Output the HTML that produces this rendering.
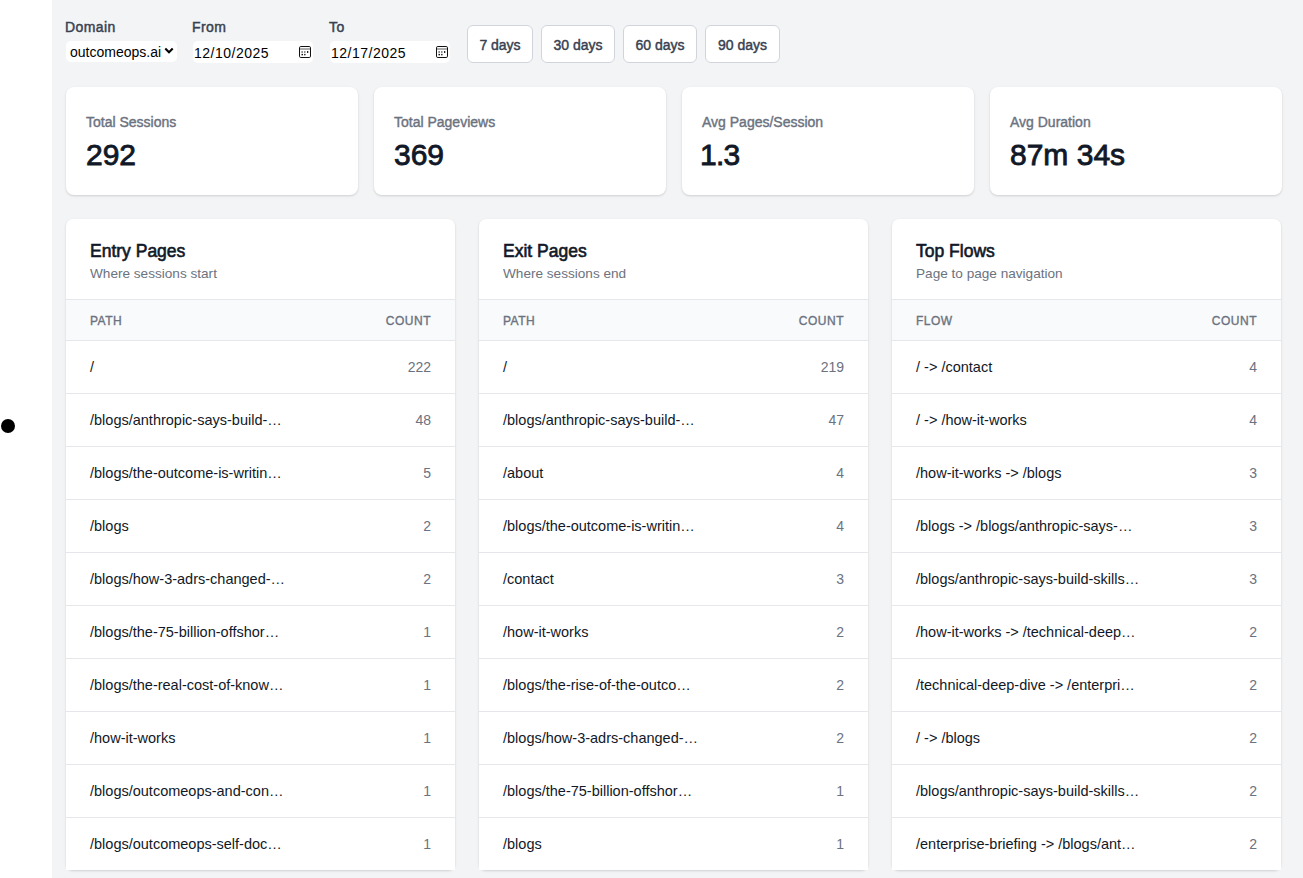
<!DOCTYPE html>
<html><head><meta charset="utf-8">
<style>
*{box-sizing:border-box;margin:0;padding:0}
html,body{width:1303px;height:878px;overflow:hidden;background:#fff;font-family:"Liberation Sans",sans-serif;color:#111827}
.dot{position:absolute;left:1px;top:419px;width:14px;height:14px;border-radius:50%;background:#000}
.main{position:absolute;left:52px;top:0;width:1251px;height:878px;background:#f3f4f6}
.lbl{position:absolute;top:19px;letter-spacing:.4px;font-size:14px;color:#374151;-webkit-text-stroke:.45px #374151;line-height:16px;white-space:nowrap}
.sel{position:absolute;top:41px;height:21px;background:#fff;border-radius:5px;font-size:14px;color:#000;line-height:21px;white-space:nowrap}
.inp{position:absolute;top:41px;height:22px;background:#fff;border-radius:5px;font-size:14px;color:#000;line-height:21px;white-space:nowrap}
.st{position:absolute;left:4px;top:1px}
.it{position:absolute;left:1px;top:2px;letter-spacing:.5px}
.chev{position:absolute;right:3px;top:6px}
.cal{position:absolute;left:106px;top:5px}
.btn{position:absolute;top:25px;height:38px;background:#fff;border:1px solid #d1d5db;border-radius:6px;font-size:14px;-webkit-text-stroke:.45px #374151;color:#374151;text-align:center;line-height:38px;white-space:nowrap}
.stat{position:absolute;top:87px;width:292px;height:108px;background:#fff;border-radius:8px;box-shadow:0 1px 3px rgba(0,0,0,.1),0 1px 2px rgba(0,0,0,.06)}
.stat .t{position:absolute;left:20px;top:27px;font-size:14px;color:#6b7280;-webkit-text-stroke:.4px #6b7280;line-height:16px;white-space:nowrap}
.stat .v{position:absolute;left:20px;top:51px;font-size:30px;color:#111827;-webkit-text-stroke:.85px #111827;line-height:34px;white-space:nowrap}
.card{position:absolute;top:219px;width:389px;height:651px;background:#fff;border-radius:7px;box-shadow:0 1px 3px rgba(0,0,0,.1),0 1px 2px rgba(0,0,0,.06)}
.card .h3{position:absolute;left:24px;top:22px;font-size:17.5px;color:#111827;-webkit-text-stroke:.6px #111827;line-height:20px;white-space:nowrap}
.card .sub{position:absolute;left:24px;top:47px;font-size:13.6px;color:#6b7280;line-height:16px;white-space:nowrap}
.thead{position:absolute;left:0;top:80px;width:389px;height:42px;background:#f9fafb;border-top:1px solid #e5e7eb;border-bottom:1px solid #e5e7eb}
.thead span{position:absolute;top:14px;-webkit-text-stroke:.35px #6b7280;font-size:12px;color:#6b7280;letter-spacing:.5px;line-height:14px}
.thead .hl{left:24px}.thead .hr{right:24px}
.row{position:absolute;left:0;width:389px;height:53px;background:#fff;border-bottom:1px solid #e5e7eb;font-size:14.5px;line-height:16px;white-space:nowrap}
.row .p{position:absolute;left:24px;top:18px;color:#111827}
.row .c{position:absolute;right:24px;top:18px;color:#6b7280;font-size:14px}

.row.last{border-bottom:0;height:52px}

</style></head><body>
<div class="dot"></div>
<div class="main"></div>
<div class="lbl" style="left:65px">Domain</div>
<div class="lbl" style="left:192px">From</div>
<div class="lbl" style="left:329px">To</div>
<div class="sel" style="left:66px;width:111px"><span class="st">outcomeops.ai</span><svg class="chev" width="10" height="8" viewBox="0 0 10 8"><path d="M1.3 1.6 L5 5.3 L8.7 1.6" fill="none" stroke="#000" stroke-width="2.1"/></svg></div>
<div class="inp" style="left:193px;width:120px"><span class="it">12/10/2025</span><svg class="cal" width="12" height="12" viewBox="0 0 12 12"><rect x="0.5" y="0.5" width="11" height="11" rx="1.3" fill="none" stroke="#111" stroke-width="1"/><rect x="1" y="2.2" width="10" height="1.6" fill="#999"/><rect x="2.5" y="5.1" width="1.2" height="1.8" fill="#555"/><rect x="5.1" y="5.1" width="1.4" height="1.8" fill="#777"/><rect x="8" y="5.1" width="1.3" height="1.8" fill="#111"/><rect x="2.5" y="7.9" width="1.5" height="1.4" fill="#111"/><rect x="5" y="7.9" width="1.6" height="1.4" fill="#333"/></svg></div>
<div class="inp" style="left:330px;width:120px"><span class="it">12/17/2025</span><svg class="cal" width="12" height="12" viewBox="0 0 12 12"><rect x="0.5" y="0.5" width="11" height="11" rx="1.3" fill="none" stroke="#111" stroke-width="1"/><rect x="1" y="2.2" width="10" height="1.6" fill="#999"/><rect x="2.5" y="5.1" width="1.2" height="1.8" fill="#555"/><rect x="5.1" y="5.1" width="1.4" height="1.8" fill="#777"/><rect x="8" y="5.1" width="1.3" height="1.8" fill="#111"/><rect x="2.5" y="7.9" width="1.5" height="1.4" fill="#111"/><rect x="5" y="7.9" width="1.6" height="1.4" fill="#333"/></svg></div>
<div class="btn" style="left:467px;width:66px">7 days</div>
<div class="btn" style="left:541px;width:74px">30 days</div>
<div class="btn" style="left:623px;width:74px">60 days</div>
<div class="btn" style="left:705px;width:75px">90 days</div>
<div class="stat" style="left:66px"><div class="t">Total Sessions</div><div class="v">292</div></div>
<div class="stat" style="left:374px"><div class="t">Total Pageviews</div><div class="v">369</div></div>
<div class="stat" style="left:682px"><div class="t">Avg Pages/Session</div><div class="v" style="letter-spacing:-.8px;left:18px">1.3</div></div>
<div class="stat" style="left:990px"><div class="t">Avg Duration</div><div class="v">87m 34s</div></div>
<div class="card" style="left:66px">
<div class="h3">Entry Pages</div><div class="sub">Where sessions start</div>
<div class="thead"><span class="hl">PATH</span><span class="hr">COUNT</span></div>
<div class="row" style="top:122px"><span class="p">/</span><span class="c">222</span></div>
<div class="row" style="top:175px"><span class="p">/blogs/anthropic-says-build-…</span><span class="c">48</span></div>
<div class="row" style="top:228px"><span class="p">/blogs/the-outcome-is-writin…</span><span class="c">5</span></div>
<div class="row" style="top:281px"><span class="p">/blogs</span><span class="c">2</span></div>
<div class="row" style="top:334px"><span class="p">/blogs/how-3-adrs-changed-…</span><span class="c">2</span></div>
<div class="row" style="top:387px"><span class="p">/blogs/the-75-billion-offshor…</span><span class="c">1</span></div>
<div class="row" style="top:440px"><span class="p">/blogs/the-real-cost-of-know…</span><span class="c">1</span></div>
<div class="row" style="top:493px"><span class="p">/how-it-works</span><span class="c">1</span></div>
<div class="row" style="top:546px"><span class="p">/blogs/outcomeops-and-con…</span><span class="c">1</span></div>
<div class="row last" style="top:599px"><span class="p">/blogs/outcomeops-self-doc…</span><span class="c">1</span></div>
</div>
<div class="card" style="left:479px">
<div class="h3">Exit Pages</div><div class="sub">Where sessions end</div>
<div class="thead"><span class="hl">PATH</span><span class="hr">COUNT</span></div>
<div class="row" style="top:122px"><span class="p">/</span><span class="c">219</span></div>
<div class="row" style="top:175px"><span class="p">/blogs/anthropic-says-build-…</span><span class="c">47</span></div>
<div class="row" style="top:228px"><span class="p">/about</span><span class="c">4</span></div>
<div class="row" style="top:281px"><span class="p">/blogs/the-outcome-is-writin…</span><span class="c">4</span></div>
<div class="row" style="top:334px"><span class="p">/contact</span><span class="c">3</span></div>
<div class="row" style="top:387px"><span class="p">/how-it-works</span><span class="c">2</span></div>
<div class="row" style="top:440px"><span class="p">/blogs/the-rise-of-the-outco…</span><span class="c">2</span></div>
<div class="row" style="top:493px"><span class="p">/blogs/how-3-adrs-changed-…</span><span class="c">2</span></div>
<div class="row" style="top:546px"><span class="p">/blogs/the-75-billion-offshor…</span><span class="c">1</span></div>
<div class="row last" style="top:599px"><span class="p">/blogs</span><span class="c">1</span></div>
</div>
<div class="card" style="left:892px">
<div class="h3">Top Flows</div><div class="sub">Page to page navigation</div>
<div class="thead"><span class="hl">FLOW</span><span class="hr">COUNT</span></div>
<div class="row" style="top:122px"><span class="p">/ -&gt; /contact</span><span class="c">4</span></div>
<div class="row" style="top:175px"><span class="p">/ -&gt; /how-it-works</span><span class="c">4</span></div>
<div class="row" style="top:228px"><span class="p">/how-it-works -&gt; /blogs</span><span class="c">3</span></div>
<div class="row" style="top:281px"><span class="p">/blogs -&gt; /blogs/anthropic-says-…</span><span class="c">3</span></div>
<div class="row" style="top:334px"><span class="p">/blogs/anthropic-says-build-skills…</span><span class="c">3</span></div>
<div class="row" style="top:387px"><span class="p">/how-it-works -&gt; /technical-deep…</span><span class="c">2</span></div>
<div class="row" style="top:440px"><span class="p">/technical-deep-dive -&gt; /enterpri…</span><span class="c">2</span></div>
<div class="row" style="top:493px"><span class="p">/ -&gt; /blogs</span><span class="c">2</span></div>
<div class="row" style="top:546px"><span class="p">/blogs/anthropic-says-build-skills…</span><span class="c">2</span></div>
<div class="row last" style="top:599px"><span class="p">/enterprise-briefing -&gt; /blogs/ant…</span><span class="c">2</span></div>
</div>
</body></html>
